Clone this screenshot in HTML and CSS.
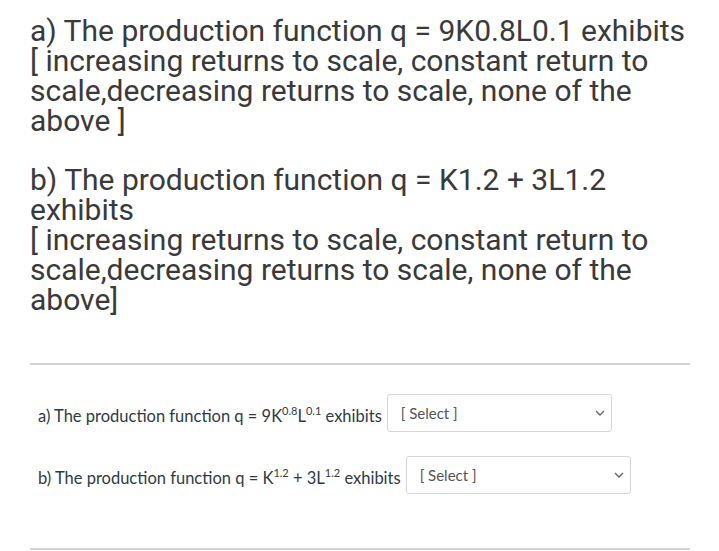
FILE: index.html
```html
<!DOCTYPE html>
<html>
<head>
<meta charset="utf-8">
<link rel="stylesheet" href="styles.css">
</head>
<body>
<div class="page">
  <div class="question">
    <p class="para">a) The production function q = 9K0.8L0.1 exhibits<br>[ increasing returns to scale, constant return to<br>scale,decreasing returns to scale, none of the<br>above ]</p>
    <p class="para second">b) The production function q = K1.2 + 3L1.2<br>exhibits<br>[ increasing returns to scale, constant return to<br>scale,decreasing returns to scale, none of the<br>above]</p>
  </div>
  <div class="quiz">
    <div class="row row-a">
      <span class="label">a) The production function q = 9K<sup>0.8</sup>L<sup>0.1</sup> exhibits</span>
      <div class="select"><span class="placeholder">[ Select ]</span><svg class="chev" width="10" height="6" viewBox="0 0 10 6"><path d="M1 1 L5 5 L9 1" fill="none" stroke="#666" stroke-width="1.4"/></svg></div>
    </div>
    <div class="row row-b">
      <span class="label">b) The production function q = K<sup>1.2</sup> + 3L<sup>1.2</sup> exhibits</span>
      <div class="select"><span class="placeholder">[ Select ]</span><svg class="chev" width="10" height="6" viewBox="0 0 10 6"><path d="M1 1 L5 5 L9 1" fill="none" stroke="#666" stroke-width="1.4"/></svg></div>
    </div>
  </div>
</div>
</body>
</html>
```
FILE: styles.css
```css
html, body {
  margin: 0;
  padding: 0;
  background: #ffffff;
}
.page {
  width: 719px;
  height: 551px;
  overflow: hidden;
}
.question {
  padding: 16px 0 0 30px;
}
.para {
  margin: 0;
  font-family: Roboto, "Noto Sans", sans-serif;
  font-size: 30px;
  line-height: 30px;
  color: #3a3a3a;
  white-space: nowrap;
}
.second {
  margin-top: 29px;
}
.quiz {
  margin: 48px 29px 0 30px;
  border-top: 2px solid #d2d2d2;
  border-bottom: 2px solid #d2d2d2;
  height: 187px;
  box-sizing: border-box;
  padding: 29px 0 0 8px;
  font-family: Lato, "Noto Sans", sans-serif;
  color: #2d3b45;
  font-size: 16.5px;
}
.row {
  display: flex;
  align-items: center;
  gap: 5px;
  height: 38px;
}
.row-b {
  margin-top: 24px;
}
.label {
  padding-top: 6px;
}
.label sup {
  font-size: 11px;
  line-height: 0;
  vertical-align: 7px;
}
.select {
  width: 225px;
  height: 38px;
  box-sizing: border-box;
  border: 1px solid #d6d6d6;
  border-radius: 3px;
  display: flex;
  align-items: center;
  justify-content: space-between;
  padding: 0 6px 0 13px;
  font-size: 15px;
  color: #555;
}
.chev {
  display: block;
}
```
